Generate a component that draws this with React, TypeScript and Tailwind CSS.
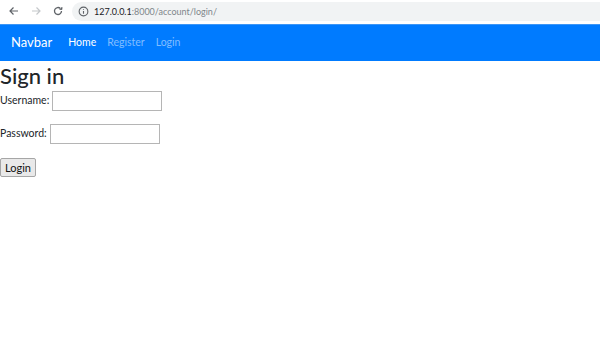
import React from 'react'

const font = { fontFamily: 'Lato, "Noto Sans", sans-serif' }

const BrowserBar = () => (
  <div className="flex h-[22px] items-center bg-white">
    <div className="flex w-[72px] items-center text-[#5f6368]">
      <svg className="ml-[8px]" width="12" height="12" viewBox="0 0 24 24" fill="none" stroke="currentColor" strokeWidth="2.4">
        <path d="M20 12H5M11 5l-7 7 7 7" />
      </svg>
      <svg className="ml-[10px] text-[#c4c7ca]" width="12" height="12" viewBox="0 0 24 24" fill="none" stroke="currentColor" strokeWidth="2.4">
        <path d="M4 12h15M13 5l7 7-7 7" />
      </svg>
      <svg className="ml-[10px]" width="12" height="12" viewBox="0 0 24 24" fill="none" stroke="currentColor" strokeWidth="2.6">
        <path d="M19 12a7 7 0 1 1-2.2-5.1" />
        <path d="M20 4v5h-5" fill="currentColor" strokeWidth="1.5" />
      </svg>
    </div>
    <div className="flex h-[19px] flex-1 items-center rounded-l-full bg-[#f1f3f4] pl-[6px]">
      <svg width="11" height="11" viewBox="0 0 24 24" fill="none" stroke="#5f6368" strokeWidth="2.4">
        <circle cx="12" cy="12" r="9.5" />
        <path d="M12 11v6M12 7v1.5" />
      </svg>
      <span className="ml-[5px] text-[9px] leading-none text-[#202124]" style={font}>
        127.0.0.1<span className="text-[#80868b]">:8000/account/login/</span>
      </span>
    </div>
  </div>
)

export default function App() {
  return (
    <div className="h-[338px] w-[600px] overflow-hidden bg-white" style={font}>
      <BrowserBar />
      <div className="h-[2px] bg-white" />
      <nav className="flex h-[37px] items-center border-t border-[#3d96f5] bg-[#007bff] px-[11px]">
        <span className="mr-[16px] text-[13px] text-white">Navbar</span>
        <div className="flex gap-[11px] text-[10.5px]">
          <span className="text-white">Home</span>
          <span className="text-[#80bdff]">Register</span>
          <span className="text-[#80bdff]">Login</span>
        </div>
      </nav>
      <div className="text-[10.5px] text-[#212529]">
        <h1 className="mt-[1px] text-[22px] font-medium leading-[27px]">Sign in</h1>
        <div className="mt-[2px] flex items-center">
          <label className="mr-[3px]">Username:</label>
          <input className="h-[20px] w-[110px] border border-[#b5b5b5] bg-white" />
        </div>
        <div className="mt-[13px] flex items-center">
          <label className="mr-[3px]">Password:</label>
          <input type="password" className="h-[20px] w-[110px] border border-[#b5b5b5] bg-white" />
        </div>
        <button className="mt-[14px] h-[19px] rounded-[2px] border border-[#a6a6a6] bg-[#e9e9e9] px-[4px] text-[11px] leading-none text-[#111]">
          Login
        </button>
      </div>
    </div>
  )
}
